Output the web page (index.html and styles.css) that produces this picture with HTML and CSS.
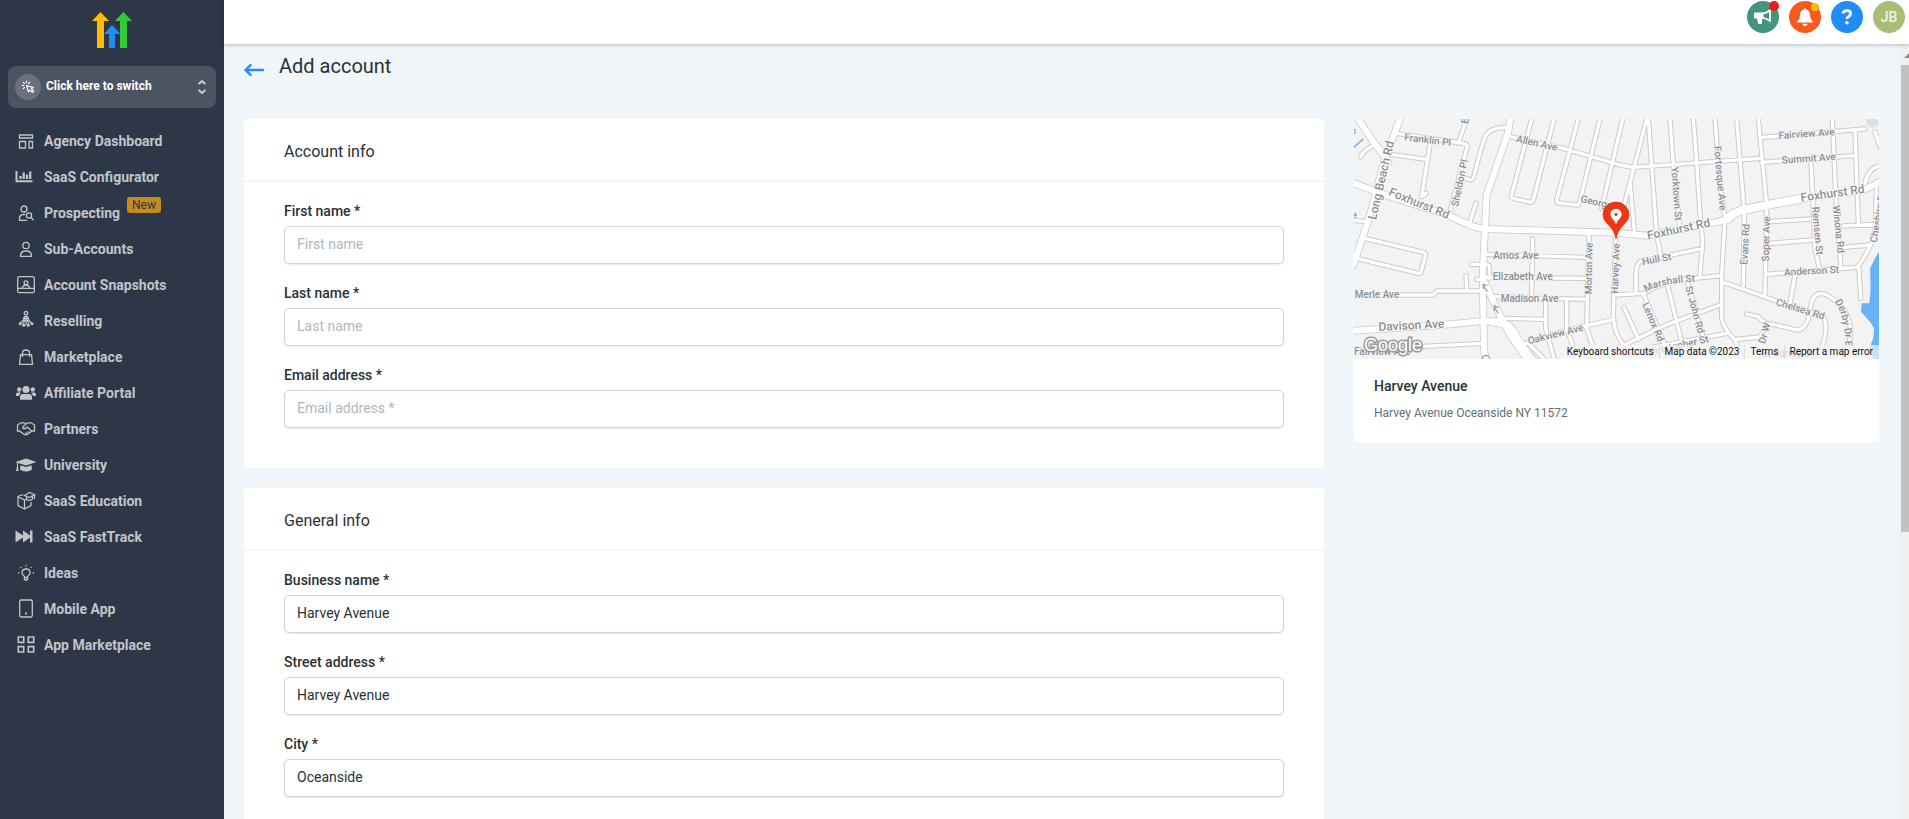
FILE: index.html
```html
<!DOCTYPE html>
<html lang="en">
<head>
<meta charset="utf-8">
<title>Add account</title>
<link rel="stylesheet" href="styles.css">
</head>
<body>
<div class="app">
  <aside class="sidebar">
    <a class="logo" href="#" aria-label="Home">
      <svg width="40" height="36" viewBox="0 0 40 36">
        <path d="M5 36V9H0L8.500 0L17 9H12V36Z" fill="#ffbc00"/>
        <path d="M28 36V9H23L31.500 0L40 9H35V36Z" fill="#34ca37"/>
        <path d="M17 36V22H12L20 13L28.500 22H23V36Z" fill="#208cf4"/>
      </svg>
    </a>
    <button class="switcher" type="button">
      <span class="switcher-icon">
        <svg width="14" height="14" viewBox="0 0 14 14" fill="none" stroke="#fff" stroke-width="1.100" stroke-linecap="round" stroke-linejoin="round"><path d="M5.500 5.500L7.500 12L9 10L11.500 12.500L12.800 11.200L10.300 8.700L12.300 7.600ZM5.500 1V2.800M1 5.500H2.800M2.300 2.300L3.500 3.500M8.700 2.300L7.500 3.500M2.300 8.700L3.500 7.500"/></svg>
      </span>
      <span class="switcher-text">Click here to switch</span>
      <svg width="8" height="16" viewBox="0 0 8 16" fill="none" stroke="#c9ccd1" stroke-width="2" stroke-linecap="round" stroke-linejoin="round"><path d="M1.200 4.500L4 2L6.800 4.500M1.200 11.500L4 14L6.800 11.500"/></svg>
    </button>
    <nav class="nav">
      <a href="#"><svg viewBox="0 0 22 22"><path d="M4.500 5H17.500V8H4.500ZM4.500 11.500H10.500V18H4.500ZM14 11.500H17.500V18H14Z"/></svg>Agency Dashboard</a>
      <a href="#"><svg viewBox="0 0 22 22"><path d="M1.500 5V15.300H17.500" stroke-width="2"/><path d="M5.500 13V10M8.700 13V6.500M12 13V8.500M15.200 13V5.500" stroke-width="2.300"/></svg>SaaS Configurator</a>
      <a href="#"><svg viewBox="0 0 22 22"><circle cx="9" cy="7" r="3"/><path d="M12 18.300H4.500V16.500Q4.500 13 8 12.500H10"/><circle cx="14" cy="13.500" r="2.600"/><path d="M16 15.500L18.500 18.300"/></svg>Prospecting<span class="tag">New</span></a>
      <a href="#"><svg viewBox="0 0 22 22"><circle cx="11" cy="7.500" r="3.200"/><path d="M5.500 18.300V17.500Q6 13.500 9.500 13H12.500Q16 13.500 16.500 17.500V18.300Z"/></svg>Sub-Accounts</a>
      <a href="#"><svg viewBox="0 0 22 22"><rect x="2.700" y="2.700" width="16.600" height="16" rx="1.500"/><path d="M3 14.300H19M7.500 14V13Q8.500 11 11 11T14.500 13V14"/><circle cx="11" cy="8.700" r="1.900"/></svg>Account Snapshots</a>
      <a href="#"><svg viewBox="0 0 22 22"><circle cx="11" cy="3.300" r="1.800"/><path d="M8.500 8.500Q9 6.500 11 6.500T13.500 8.500Z"/><path d="M11 9V15M10 9.500L8 14.500M12 9.500L14 14.500M9 9.500L5 13.500M13 9.500L17 13.500"/><g class="solid"><circle cx="5.200" cy="13.700" r="1.500"/><circle cx="8.800" cy="15.300" r="1.500"/><circle cx="13.200" cy="15.300" r="1.500"/><circle cx="17" cy="13.700" r="1.500"/></g></svg>Reselling</a>
      <a href="#"><svg viewBox="0 0 22 22"><path d="M5.500 8.700H16.500L17.500 18.300H4.500ZM7.500 11V7Q7.500 4 11 4T14.500 7V11"/></svg>Marketplace</a>
      <a href="#"><svg viewBox="0 0 22 22"><g class="solid"><circle cx="11" cy="7.500" r="3.600"/><circle cx="4.200" cy="7.500" r="2.200"/><circle cx="17.800" cy="7.500" r="2.200"/><path d="M5 17.700V15Q5 12 8 12H14Q17 12 17 15V17.700ZM1 14V12.500Q1 10.500 3 10.500H6Q4.500 12 4 14ZM21 14V12.500Q21 10.500 19 10.500H16Q17.500 12 18 14Z"/></g></svg>Affiliate Portal</a>
      <a href="#"><svg viewBox="0 0 22 22"><path d="M11 6L9 4.800H6L2.500 7V13H4.500L9.500 16.700H12L17 13H19.500V7L16 4.800H12.500L8 8.500V10.500H10.500L12.500 9L16.500 13M12.500 13.500L14.500 15M10.500 14.500L12 16"/></svg>Partners</a>
      <a href="#"><svg viewBox="0 0 22 22"><g class="solid"><path d="M11 4.500L21.500 8L11 11.500L3 9V12L3.500 17H1L2 12V9L0.500 8Z"/><path d="M5.500 11.300L11 13L16.500 11.300L17 15.500Q14.500 17.500 11 17.500T5 15.500Z"/></g></svg>University</a>
      <a href="#"><svg viewBox="0 0 22 22"><path d="M8 4.500L3 6.500V15.500L9.500 19L16 15.500V12M3 7L9.500 10V19M9.500 10L11.500 9.300M9.500 5.500L14.500 2.500L19.500 4.500L14.500 7.500ZM11.500 7V9.500Q14.500 11.500 17.500 9V6M19.500 5V9"/></svg>SaaS Education</a>
      <a href="#"><svg viewBox="0 0 22 22"><path class="solid" d="M0.500 4.500L8 9.500V4.500L15 9.500V4.500H17.500V16.500H15V11.500L8 16.500V11.500L0.500 16.500Z"/></svg>SaaS FastTrack</a>
      <a href="#"><svg viewBox="0 0 22 22"><path d="M9.500 15.500V14.500Q7 13 7 10.700Q7 7.200 11 7T15 10.700Q15 13 12.500 14.500V15.500ZM9.700 18H12.300M11 3V4.300M5.500 5L6.300 5.800M16.500 5L15.700 5.800M3 11H4.300M17.700 11H19M9.500 15V18M12.500 15V18"/></svg>Ideas</a>
      <a href="#"><svg viewBox="0 0 22 22"><rect x="4.700" y="2" width="12.600" height="17" rx="1.500"/><path d="M11 14.500V16.500" stroke-width="1.800"/></svg>Mobile App</a>
      <a href="#"><svg viewBox="0 0 22 22"><path d="M3.300 3H8.700V8.400H3.300ZM13.300 3H18.700V8.400H13.300ZM3.300 12.600H8.700V18H3.300ZM13.300 12.600H18.700V18H13.300Z" stroke-width="1.600"/></svg>App Marketplace</a>
    </nav>
  </aside>

  <div class="main">
    <header class="topbar">
      <button type="button" class="round green" aria-label="Announcements">
        <svg width="18" height="16" viewBox="0 0 18 16"><path fill="#fff" d="M0 4.500Q0 3.500 1 3.500H8Q12 3.500 15.500 0.500Q17 0 17 1.500V12.500Q17 14 15.500 12.500Q12 10 8 9.700V14Q8 15 7 15H5Q4 15 4 14L3 9.500H1Q0 9.500 0 8.500Z"/><path fill="#43957f" d="M9.500 5.200V8.300Q12.500 8.600 15 10.500V3Q12.500 5 9.500 5.200Z"/></svg>
        <span class="dot red"></span>
      </button>
      <button type="button" class="round orange" aria-label="Notifications">
        <svg width="16" height="18" viewBox="0 0 16 18"><path fill="#fff" d="M8 0Q9 0 9 1.500Q13 2.500 13 7Q13 11 15.500 13V14.500H0.500V13Q3 11 3 7Q3 2.500 7 1.500Q7 0 8 0ZM5.500 15.700H10.500Q10 18 8 18T5.500 15.700Z"/></svg>
        <span class="dot yellow"></span>
      </button>
      <button type="button" class="round blue" aria-label="Help">
        <svg width="12" height="16" viewBox="0 0 12 16" fill="none"><path d="M2 4.500Q2.500 1.600 6 1.600T9.700 4.600Q9.700 6.300 7.800 7.400T6 10" stroke="#fff" stroke-width="2.800"/><circle cx="5.900" cy="13.700" r="1.800" fill="#fff"/></svg>
      </button>
      <button type="button" class="round olive">JB</button>
    </header>

    <div class="body">
      <main class="content">
        <div class="page-head">
          <a href="#" class="back" aria-label="Back"><svg width="20" height="12" viewBox="0 0 20 12" fill="none" stroke="#208cf4" stroke-width="2.400" stroke-linecap="round" stroke-linejoin="round"><path d="M19 6H1.500M6.500 1.200L1.500 6L6.500 10.800"/></svg></a>
          <h1>Add account</h1>
        </div>
        <div class="columns">
          <form class="forms">
            <section class="card">
              <h2>Account info</h2>
              <div class="fields">
                <div class="field"><label for="first">First name *</label><input id="first" type="text" placeholder="First name"></div>
                <div class="field"><label for="last">Last name *</label><input id="last" type="text" placeholder="Last name"></div>
                <div class="field"><label for="email">Email address *</label><input id="email" type="email" placeholder="Email address *"></div>
              </div>
            </section>
            <section class="card">
              <h2>General info</h2>
              <div class="fields">
                <div class="field"><label for="biz">Business name *</label><input id="biz" type="text" value="Harvey Avenue"></div>
                <div class="field"><label for="street">Street address *</label><input id="street" type="text" value="Harvey Avenue"></div>
                <div class="field"><label for="city">City *</label><input id="city" type="text" value="Oceanside"></div>
              </div>
            </section>
          </form>

          <section class="card map-card">
            <div class="map">
              <svg class="map-art" viewBox="12 12 1575 720" preserveAspectRatio="xMidYMid slice">
                <defs>
                  <path id="minor" d="M140 55L340 85Q355 88 350 100L300 290M325 85L350 12M120 118L235 134M240 88L215 245L228 235M345 190L362 195Q372 195 380 150L400 80Q410 35 470 38M360 320L378 265M480 65L640 100L810 150L850 157L1230 130M545 12L485 240Q482 248 490 250L540 262Q548 262 550 255L612 12M685 12L620 255Q619 262 627 264L680 270Q687 270 689 262L750 12M818 12L755 280M890 12L820 280M840 200L853 350M895 12L905 150L920 360L932 420M960 12L970 150L990 340M1030 12L1040 140L1050 300L1058 380L1050 480M1095 12L1110 200L1125 310L1115 480L1115 610Q1120 640 1155 675L1180 740M1160 12L1183 290L1180 512M1225 12L1250 270L1245 545M1383 140L1395 400L1408 460M1447 12L1460 300L1473 460M1515 45L1525 325M1230 68L1545 42M1235 142L1510 122M1260 320L1380 312M1260 385L1390 375M1480 333L1590 327M1480 397L1560 390M1250 478L1520 457Q1540 440 1575 360L1580 200M1527 460L1532 550M1575 50L1592 100M1545 205Q1555 158 1592 152M1335 480L1320 565M1115 500L1280 558L1410 600Q1450 620 1400 740M1190 597L1225 605Q1245 630 1270 628L1340 645Q1370 645 1380 590Q1385 520 1430 540Q1540 600 1480 740M1160 673L1230 666L1250 630M1058 400L870 440Q858 450 858 480V535M1115 482L1010 492Q950 495 880 535L795 540M880 535L940 680L960 740M1010 490L1060 670M950 500L1000 700M790 705L960 625L1110 570M890 700L1130 655M822 578L865 672M717 358L710 640L745 740M797 365L790 600Q790 650 820 690M515 690L650 645L785 615M410 418L710 427M400 487L710 490M430 545L710 553M548 372L545 545M587 560V640L615 740M650 560V640L685 740M455 610L585 613M45 370L220 412Q228 415 226 422L214 468Q212 476 205 475L20 430M365 448H412Q418 450 418 458V490M380 493H400M348 482L350 520M0 540H250L260 528L400 528M0 705L400 685M75 90Q40 105 32 125M0 315L50 320M515 690L560 740M540 690L590 740"/>
                  <path id="major" d="M0 200L100 238L295 300Q370 340 405 342L800 353L890 362L1080 325L1140 312M1340 252L1540 225L1592 200M150 12L105 130L60 300L10 450M25 12L70 80L115 140M480 12L475 50L410 240L398 480L402 700L408 740M0 648L300 628L400 618L450 622M398 490L440 580L480 660L540 745"/>
                  <path id="wide" d="M1130 313Q1150 292 1180 285L1260 268L1350 252M430 620Q480 620 500 670L550 745"/>
                  <path id="marshall" d="M888 532Q935 502 1060 499"/>
                  <path id="derby" d="M1454 560Q1490 610 1486 720"/>
                </defs>
                <rect x="0" y="0" width="1600" height="745" fill="#f3f3f3"/>
                <path d="M1590 405L1575 430L1560 460L1562 520L1558 565L1535 565L1533 590L1560 620L1572 640L1570 670L1558 700L1575 745H1600V405Z" fill="#68b3f6"/>
                <path d="M8 100L40 72" stroke="#5aa9f5" stroke-width="4"/>
                <circle cx="1568" cy="18" r="20" fill="#dedede"/>
                <g fill="none" stroke="#cbcbcb" stroke-linecap="round" stroke-linejoin="round"><use href="#minor" stroke-width="16"/><use href="#major" stroke-width="23"/><use href="#wide" stroke-width="29"/></g>
                <g fill="none" stroke="#fff" stroke-linecap="round" stroke-linejoin="round"><use href="#minor" stroke-width="10"/><use href="#major" stroke-width="18"/><use href="#wide" stroke-width="24"/></g>
                <path d="M412 530L398 508M400 522V508L412 512M444 595L432 572M433 588V572L446 578" stroke="#9da0a5" stroke-width="4" fill="none"/>
                <circle cx="408" cy="732" r="11" fill="#fff" stroke="#999" stroke-width="4"/>
                <g class="street">
                  <text transform="translate(162 76) rotate(7)">Franklin Pl</text>
                  <text transform="translate(497 80) rotate(13)">Allen Ave</text>
                  <text transform="translate(324 276) rotate(-78)">Sheldon Pl</text>
                  <text transform="translate(354 28) rotate(-80)">E</text>
                  <text transform="translate(8 60) rotate(-35)">e</text>
                  <text transform="translate(-30 302) rotate(10)">Ave</text>
                  <text transform="translate(690 260) rotate(13)">George</text>
                  <text x="430" y="432">Amos Ave</text>
                  <text x="428" y="496">Elizabeth Ave</text>
                  <text x="452" y="560">Madison Ave</text>
                  <text x="14" y="548">Merle Ave</text>
                  <text x="12" y="720">Fairview Ave</text>
                  <text transform="translate(536 688) rotate(-14)">Oakview Ave</text>
                  <text transform="translate(725 538) rotate(-89)">Morton Ave</text>
                  <text transform="translate(804 536) rotate(-88)">Harvey Ave</text>
                  <text transform="translate(964 156) rotate(86)">Yorktown St</text>
                  <text transform="translate(1092 94) rotate(85)">Fortesque Ave</text>
                  <text transform="translate(1286 72) rotate(-4)">Fairview Ave</text>
                  <text transform="translate(1296 146) rotate(-4)">Summit Ave</text>
                  <text transform="translate(1386 276) rotate(85)">Remsen St</text>
                  <text transform="translate(1448 272) rotate(84)">Winona Rd</text>
                  <text transform="translate(1192 450) rotate(-87)">Evans Rd</text>
                  <text transform="translate(1256 440) rotate(-88)">Soper Ave</text>
                  <text transform="translate(1580 384) rotate(-80)">Cheshire Dr</text>
                  <text transform="translate(878 450) rotate(-10)">Hull St</text>
                  <text><textPath href="#marshall">Marshall St</textPath></text>
                  <text transform="translate(876 568) rotate(67)">Lenox Rd</text>
                  <text transform="translate(1006 516) rotate(75)">St John Rd</text>
                  <text transform="translate(890 724) rotate(-13)">Christopher St</text>
                  <text transform="translate(1303 482) rotate(-3)">Anderson St</text>
                  <text transform="translate(1276 570) rotate(17)">Chelsea Rd</text>
                  <text><textPath href="#derby">Derby Dr E</textPath></text>
                  <text transform="translate(1245 688) rotate(-75)">Dr W</text>
                  <text x="1236" y="726">E. Surrey Dr</text>
                </g>
                <g class="street avenue">
                  <text transform="translate(114 240) rotate(22)">Foxhurst Rd</text>
                  <text transform="translate(78 316) rotate(-77)">Long Beach Rd</text>
                  <text transform="translate(894 374) rotate(-12)">Foxhurst Rd</text>
                  <text transform="translate(1354 260) rotate(-8)">Foxhurst Rd</text>
                  <text transform="translate(86 648) rotate(-3)">Davison Ave</text>
                </g>
                <path d="M798 372Q794 347 775 329Q759 315 759 299A39 38 0 0 1 837 299Q837 315 821 329Q802 347 798 372Z" fill="#ee3714" stroke="#d8290c" stroke-width="2"/>
                <path d="M798 328Q795 318 786 310Q781 305 781 298A17 17 0 0 1 815 298Q815 305 810 310Q801 318 798 328Z" fill="#fff"/>
                <circle cx="798" cy="298" r="5" fill="#ee3714"/>
              </svg>
              <span class="google">Google</span>
              <div class="map-terms">
                <button type="button">Keyboard shortcuts</button><span>Map data ©2023</span><a href="#">Terms</a><a href="#">Report a map error</a>
              </div>
            </div>
            <div class="place">
              <h3>Harvey Avenue</h3>
              <p>Harvey Avenue Oceanside NY 11572</p>
            </div>
          </section>
        </div>
      </main>
      <div class="scroll" aria-hidden="true">
        <svg width="10" height="6" viewBox="0 0 10 6"><path d="M5 6L10 1V6Z" fill="#8d8d8d"/></svg>
        <div class="rail"><div class="thumb"></div></div>
      </div>
    </div>
  </div>
</div>
</body>
</html>
```
FILE: styles.css
```css
* { box-sizing: border-box; }
body { margin: 0; font-family: Roboto, "Liberation Sans", sans-serif; font-size: 14px; color: #2a3135; }
h1, h2, h3, p { margin: 0; font-weight: 400; }
button { font-family: inherit; border: 0; padding: 0; cursor: pointer; }
a { text-decoration: none; color: inherit; }
svg { display: block; flex: none; }

.app { display: flex; height: 100vh; overflow: hidden; }

.sidebar { flex: none; width: 224px; padding: 12px 8px; background: #2d3748; }
.logo { display: flex; justify-content: center; }
.switcher { display: flex; align-items: center; gap: 5px; width: 100%; height: 42px; margin: 18px 0 15px; padding: 0 10px 0 7px; border-radius: 8px; background: #4b5463; color: #fff; }
.switcher-icon { display: flex; align-items: center; justify-content: center; width: 26px; height: 26px; border-radius: 50%; background: #6a717d; }
.switcher-text { flex: 1; padding-bottom: 2px; text-align: left; font-size: 12px; font-weight: 700; }
.nav { display: flex; flex-direction: column; }
.nav a { display: flex; align-items: center; gap: 7px; height: 36px; padding-left: 7px; font-weight: 700; color: #c3c5c8; }
.nav svg { width: 22px; height: 22px; fill: none; stroke: #c3c5c8; stroke-width: 1.3px; }
.nav .solid { fill: #c3c5c8; stroke: none; }
.tag { align-self: flex-start; margin-top: 2px; padding: 0 5px; border-radius: 3px; background: #c28c1c; color: #2d3748; font-size: 12px; font-weight: 400; line-height: 16px; }

.main { flex: 1; min-width: 0; display: flex; flex-direction: column; }
.topbar { position: relative; display: flex; justify-content: flex-end; gap: 10px; flex: none; height: 44px; padding: 1px 4px 0; background: #fff; box-shadow: 0 1px 4px rgba(0, 0, 0, .25); }
.round { position: relative; display: flex; align-items: center; justify-content: center; width: 32px; height: 32px; border-radius: 50%; color: #fff; font-size: 14px; font-weight: 500; }
.green { background: #43957f; }
.orange { background: #f9591f; }
.blue { background: #208cf4; }
.olive { background: #aabd78; color: #eff3e6; }
.dot { position: absolute; top: 0; right: 0; width: 10px; height: 10px; border-radius: 50%; }
.red { background: #ed1c1c; }
.yellow { top: 2px; right: 2px; width: 8px; height: 8px; background: #ffbc00; }

.body { flex: 1; min-height: 0; display: flex; }
.content { flex: 1; min-width: 0; overflow: hidden; padding: 8px 5px 0; background: #f1f6fa; }
.page-head { display: flex; align-items: center; gap: 15px; padding: 0 15px; }
.back { padding-top: 8px; }
h1 { font-size: 20px; line-height: 28px; }
.columns { display: grid; grid-template-columns: 2fr 1fr; align-items: start; padding-top: 39px; }
.forms { display: flex; flex-direction: column; gap: 20px; padding: 0 15px; }
.card { background: #fff; border-radius: 4px; }
h2 { padding: 21px 40px 16px; border-bottom: 2px solid #f1f6fa; font-size: 16px; line-height: 24px; }
.fields { display: flex; flex-direction: column; gap: 20px; padding: 20px 40px 40px; }
.field { display: flex; flex-direction: column; gap: 6px; }
label { font-weight: 500; line-height: 18px; color: #2a3135; }
input { width: 100%; height: 38px; padding: 0 12px 2px; border: 1px solid #d0d3dd; border-radius: 5px; background: #fff; box-shadow: 0 1px 2px rgba(16, 24, 40, .1); color: #2a3135; font-family: inherit; font-size: 14px; outline: 0; }
input::placeholder { color: #afb8bc; }

.map-card { margin: 0 15px; overflow: hidden; }
.map { position: relative; height: 240px; }
.map-art { width: 100%; height: 100%; }
.street { fill: #8b8e93; font-size: 30px; font-weight: 500; stroke: #f6f6f6; stroke-width: 5px; paint-order: stroke; stroke-linejoin: round; }
.avenue { font-size: 36px; stroke: #fff; }
.google { position: absolute; left: 10px; bottom: 4px; font-family: "Liberation Sans", sans-serif; font-size: 18px; line-height: 20px; color: #fff; -webkit-text-stroke: 3px #999; paint-order: stroke; }
.map-terms { position: absolute; right: 0; bottom: 0; display: flex; align-items: center; height: 14px; padding-right: 1px; background: rgba(245, 245, 245, .7); font-size: 10px; line-height: 14px; color: #000; }
.map-terms > * { padding: 0 5px; background: none; font-size: 10px; line-height: 14px; color: #111; }
.map-terms > * + * { border-left: 1px solid #ddd; }
.place { display: flex; flex-direction: column; gap: 8px; padding: 17px 20px 20px; }
h3 { font-size: 14px; font-weight: 500; line-height: 20px; }
.place p { font-size: 12px; line-height: 18px; color: #607179; }

.scroll { flex: none; display: flex; flex-direction: column; width: 10px; background: #f0f0f0; }
.scroll svg { margin: 8px 0 7px; }
.rail { flex: 1; padding-left: 2px; }
.thumb { height: 62%; background: #c1c1c1; }
```
